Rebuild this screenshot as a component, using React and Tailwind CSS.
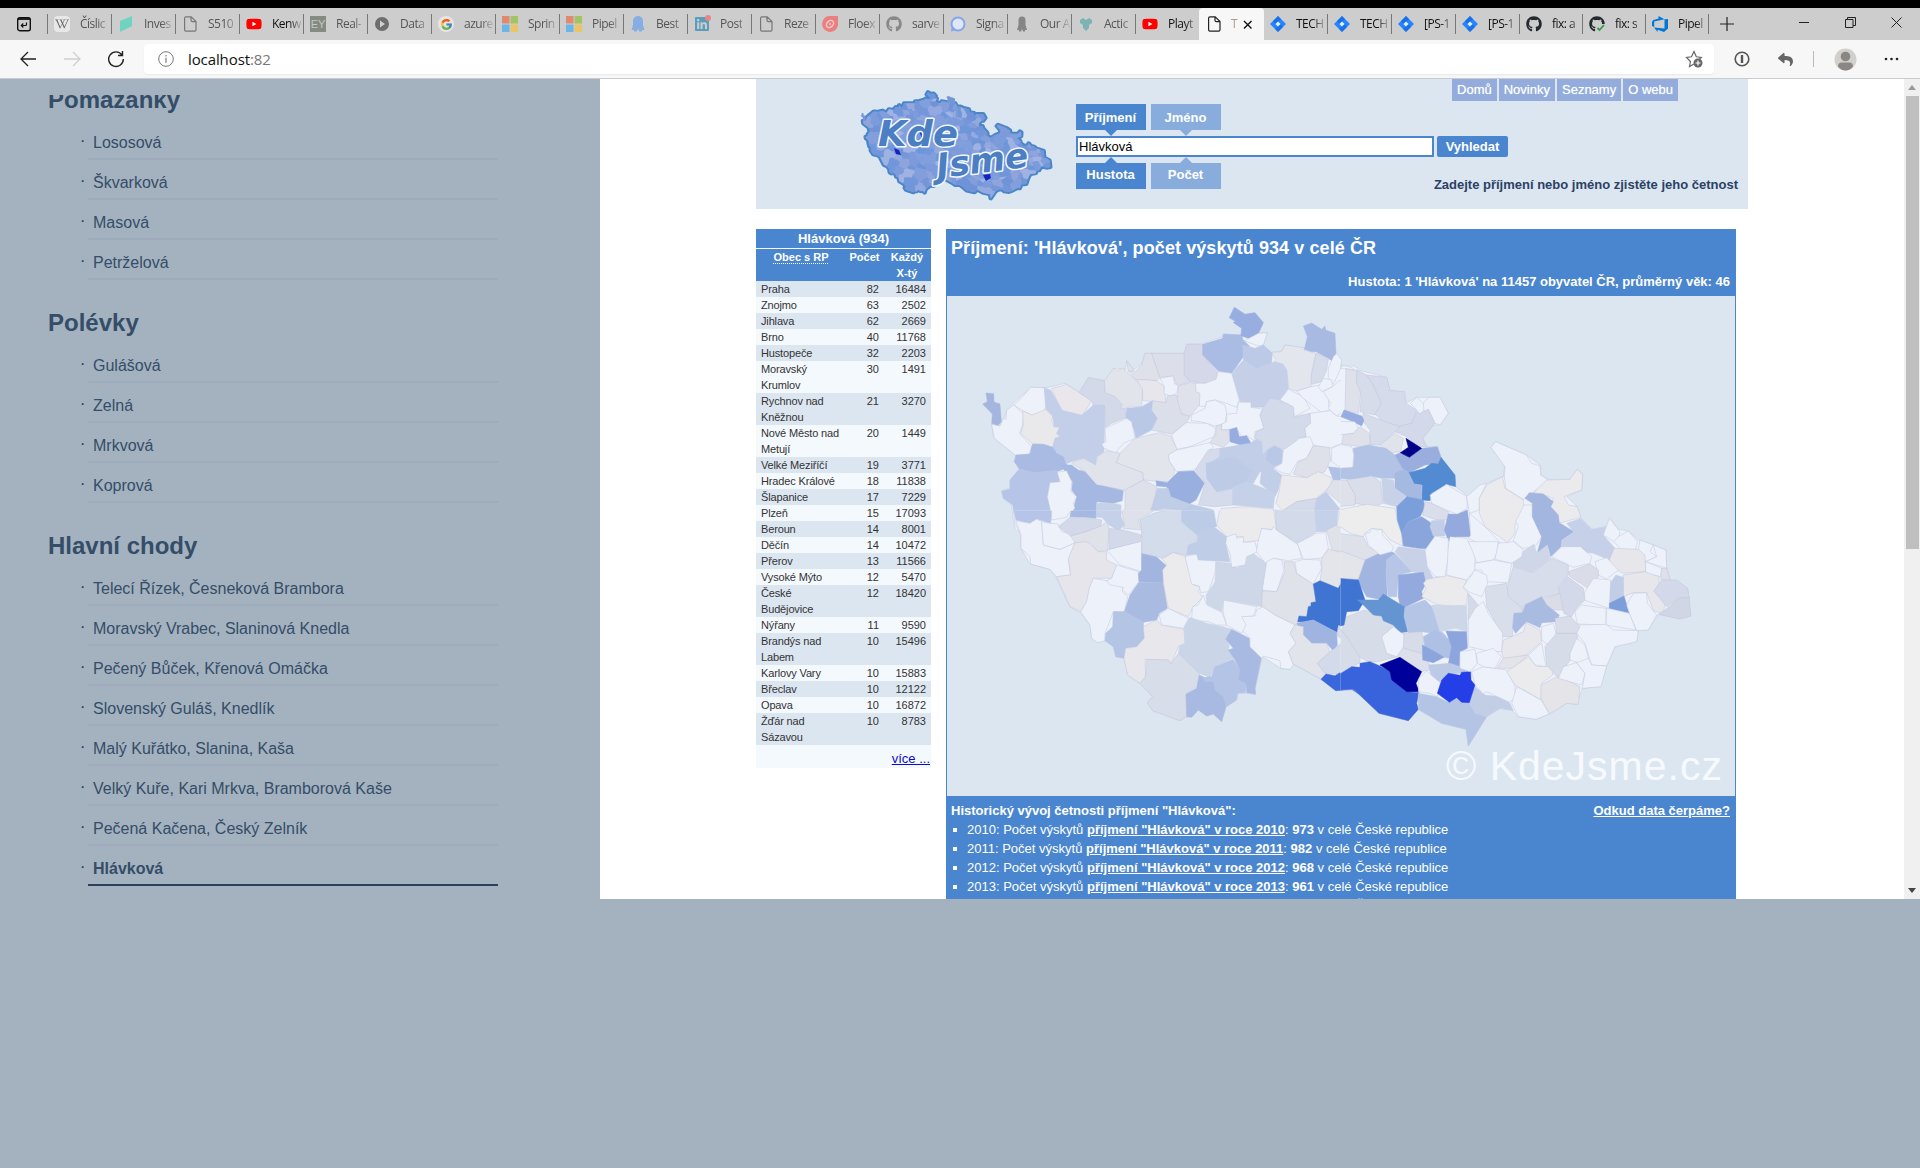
import React from "react";
import { FaWikipediaW, FaGithub, FaReply, FaLinkedin, FaYoutube } from "react-icons/fa";
import { FcGoogle } from "react-icons/fc";

const W = "#edf2fa";

/* Districts of the Czech Republic, grouped in three map sheets drawn at 3x.
   Neighbouring sheets overlap, so each is clipped just inside its border. */
const SHEETS = [
  {
    id: "nw",
    clip: [-10, -10, 1208, 728],
    transform: "translate(13 -6) scale(0.33333)",
    base: "95,405 100,440 168,497 163,515 178,537 150,570 148,595 125,603 130,625 155,645 160,690 168,725 1205,725 1205,240 1180,228 1145,228 1128,190 1118,213 1085,185 975,165 965,183 935,187 910,165 922,128 895,130 910,98 885,68 855,73 823,52 808,83 845,112 843,135 790,132 788,140 728,160 680,163 673,190 555,190 545,222 520,240 500,212 497,238 463,235 435,272 385,263 358,305 315,280 275,290 255,293 215,292 170,330 140,360 133,385 125,390 122,408",
    areas: [
      ["#a4b6df", "78,309 101,311 102,336 120,342 124,395 113,408 95,400 97,372 68,342 82,335"],
      [W, "95,403 120,408 130,385 138,388 140,360 162,345 190,372 188,405 178,430 215,470 208,492 168,497 103,445"],
      [W, "162,345 190,318 212,292 253,293 257,350 250,368 215,375 188,362"],
      ["#e9e8ea", "188,362 215,375 258,358 278,378 275,395 282,410 300,412 290,430 300,440 285,445 278,472 250,463 218,462 182,430 190,405"],
      ["#e9e7eb", "275,295 310,287 315,280 345,300 392,330 388,345 365,376 330,367 307,362 292,335"],
      ["#c3cfe8", "253,293 272,300 292,335 307,362 365,376 400,345 435,346 432,485 410,500 407,525 370,505 335,515 318,522 310,500 290,490 278,472 285,445 300,440 290,430 300,412 282,410 278,378 258,358"],
      ["#d3d9e9", "385,263 433,272 436,308 465,320 487,345 495,355 500,382 455,400 435,412 434,346 400,345 392,330 358,308"],
      ["#dfe1ea", "525,245 545,225 555,190 575,190 600,262 590,272 525,268 505,240"],
      ["#dfe1ea", "500,212 522,240 505,245"],
      ["#e2e4ec", "460,235 472,242 488,235 500,245 525,268 548,290 545,352 515,348 498,355 482,357 487,345 465,320 436,308 433,272"],
      ["#dcdfea", "575,190 673,190 673,255 690,275 650,288 640,258 600,262"],
      ["#d4d8e8", "673,190 680,163 728,163 728,195 772,245 768,268 735,280 690,275 673,255"],
      ["#e6e6ec", "530,268 590,272 613,290 618,338 548,332 548,300"],
      [W, "600,265 640,258 643,280 655,288 650,310 632,317 612,312 613,290"],
      ["#e0e2eb", "655,288 690,278 708,280 710,305 722,310 718,345 690,378 665,372 652,340"],
      ["#aabce3", "728,163 788,145 790,132 845,135 850,150 890,190 850,200 815,250 775,243 728,195"],
      ["#98aee0", "823,52 855,73 885,68 910,98 893,135 870,147 843,137 845,115 820,98 826,94 808,83"],
      [W, "895,130 922,128 910,165 895,168 853,152"],
      ["#bccae8", "848,165 885,175 910,165 937,190 935,220 890,237 850,210"],
      ["#e4e6ed", "935,187 965,185 975,165 1033,173 1032,180 1068,190 1055,250 1053,290 1010,303 985,295 980,240 968,222 940,218 947,210"],
      ["#a8bae2", "1030,108 1055,99 1085,118 1095,108 1097,120 1125,130 1128,190 1118,213 1068,185 1055,185 1033,178 1042,140"],
      ["#c5d0e8", "815,250 850,210 890,237 945,215 968,222 980,240 985,295 960,330 930,325 910,352 873,352 873,337 840,335"],
      [W, "707,280 735,280 768,268 775,245 815,250 838,330 830,352 800,340 765,330 740,335 735,350 718,348 720,310 708,305"],
      [W, "740,335 765,330 795,345 800,370 795,400 765,408 722,395 693,392 695,375 735,355"],
      [W, "800,372 830,370 835,337 873,337 873,352 908,357 900,375 912,415 885,425 882,452 860,437 845,440 830,415 785,420 785,403 800,395"],
      ["#97ace0", "807,420 830,412 838,440 860,437 873,460 862,483 842,465 810,455"],
      ["#d3daea", "930,325 960,330 1000,350 1003,380 1050,370 1052,400 1035,415 1038,440 1012,445 1000,465 968,478 943,468 908,495 903,460 885,445 888,425 912,415 900,375 908,357"],
      [W, "985,298 1030,320 1050,355 1003,380 1000,350 960,330"],
      [W, "1010,303 1053,290 1080,285 1108,310 1105,345 1110,360 1085,368 1030,325"],
      ["#d6dce9", "1068,190 1105,205 1100,240 1085,275 1055,283 1053,260"],
      [W, "1120,200 1130,190 1145,210 1140,240 1120,283 1105,262 1105,235"],
      [W, "1075,290 1090,265 1115,270 1118,290 1085,305"],
      [W, "1140,270 1160,300 1155,360 1130,378 1105,355 1112,340 1090,305 1118,290"],
      [W, "1145,228 1160,228 1180,235 1178,250 1145,245"],
      ["#dfe1ea", "1145,250 1180,250 1205,240 1205,360 1160,355 1157,300"],
      [W, "1050,370 1110,362 1130,378 1145,380 1165,398 1195,400 1190,420 1150,430 1145,460 1110,475 1060,465 1038,440 1035,415 1052,400"],
      ["#97ace0", "1143,380 1158,360 1205,375 1205,398 1165,398"],
      ["#dfe1ea", "1195,400 1205,450 1175,465 1145,455 1150,430"],
      [W, "1020,445 1050,440 1060,465 1040,505 1012,515 990,553 965,548 943,535 965,520 970,480"],
      ["#dfe1ea", "1060,468 1108,472 1112,510 1095,545 1040,563 1000,552 1015,515 1040,505"],
      ["#b0c1e5", "1105,530 1145,535 1175,530 1205,480 1205,570 1120,570"],
      [W, "1115,475 1145,462 1175,468 1185,495 1175,530 1145,535 1115,515"],
      ["#b9c8e6", "922,480 943,468 968,480 965,520 943,530 915,510"],
      ["#b9c8e7", "545,350 578,332 575,360 592,385 575,420 528,445 522,418 497,385 500,355"],
      ["#dadfea", "578,332 618,338 622,318 650,315 655,340 665,372 690,380 678,400 635,432 575,420 592,385 575,360"],
      [W, "435,415 500,385 515,395 525,445 490,460 465,490 432,475 425,462 437,455"],
      [W, "635,435 678,398 740,400 768,415 762,440 690,470 650,478"],
      ["#dfe1ea", "768,408 785,405 783,420 808,420 808,455 790,472 750,458 768,430"],
      ["#e3e5ec", "525,445 600,428 632,438 652,480 625,495 628,513 645,540 640,560 625,575 600,575 550,570 548,548 470,520 480,490"],
      [W, "625,495 650,480 750,458 760,470 705,540 650,545 628,513"],
      ["#e1e3ec", "440,482 467,487 480,490 467,517 548,548 550,570 495,600 430,590 410,585 375,545 335,520 370,505 407,525 412,500"],
      ["#a9bbe2", "218,462 250,463 278,472 290,490 310,500 318,522 330,530 290,545 222,548 178,537 163,515 168,495 210,492 215,470"],
      ["#b6c5e7", "178,537 222,548 290,540 300,575 270,578 262,620 270,655 272,700 235,690 210,700 165,690 158,645 130,625 125,603 150,597 150,570"],
      ["#a5b8e1", "305,525 335,525 355,540 375,545 410,585 430,588 490,602 487,632 460,640 410,635 408,680 375,685 335,675 350,620 335,600 338,575 315,545"],
      [W, "292,547 320,542 335,575 333,605 350,620 340,640 345,655 310,690 275,688 270,655 262,620 270,578 300,575"],
      ["#d5dbea", "705,540 745,480 780,475 780,500 740,525 745,570 775,605 818,595 817,645 765,650 715,645 735,580"],
      ["#c2cee8", "780,475 870,460 890,448 905,455 908,495 922,480 915,510 943,530 940,545 900,545 880,580 845,590 770,600 740,525 780,500"],
      ["#bdcbe7", "738,520 825,500 875,545 850,588 770,605 740,565"],
      ["#98afe0", "588,572 622,578 655,545 702,543 733,580 708,630 688,642 630,620 620,590 590,588"],
      ["#dfe1ea", "495,600 550,570 590,590 585,630 568,670 535,690 530,725 490,725 483,670 495,655"],
      ["#c0cde7", "592,595 625,595 632,620 688,642 665,660 610,655 570,670"],
      ["#c2cee8", "905,535 945,540 965,555 955,600 945,620 900,580"],
      ["#c5d1e8", "820,590 860,575 900,590 945,610 940,655 885,650 817,645"],
      ["#ebebee", "965,555 1040,563 1075,545 1118,565 1110,590 1070,625 1010,635 968,662 948,640 958,600"],
      ["#dfe1ea", "1120,570 1180,570 1183,655 1160,655 1098,603"],
      ["#c2cee8", "1070,625 1098,605 1138,655 1128,690 1130,725 1095,725 1060,690"],
      ["#d3daea", "968,662 1010,635 1070,625 1060,690 1065,725 945,725 940,660"],
      ["#ebebee", "785,655 860,650 940,657 950,725 780,725 770,690"],
      ["#bccbe6", "665,660 690,642 760,660 775,690 765,725 670,725"],
      ["#d3daea", "610,655 665,660 670,725 530,725 535,690 570,670"],
      ["#c5d1e8", "410,640 460,640 483,645 483,680 490,725 440,725 425,685 408,680"],
      ["#d3d9e9", "300,725 330,690 375,682 420,690 415,725"],
      ["#ebebee", "1138,655 1205,650 1205,725 1140,725 1128,690"],
    ],
  },
  {
    id: "sw",
    clip: [-10, 2, 1208, 700],
    transform: "translate(13 214) scale(0.33333)",
    base: "160,-5 165,40 183,75 183,115 210,162 270,178 290,205 330,292 362,308 390,345 395,385 412,398 435,392 460,410 467,440 492,445 503,495 540,520 578,560 562,578 578,602 660,632 678,620 695,620 715,600 740,618 760,612 785,635 798,590 833,565 835,548 887,553 885,535 908,440 962,475 990,478 1000,462 1085,510 1130,542 1175,540 1205,557 1205,-5",
    areas: [
      ["#b6c5e7", "160,-5 275,-5 272,40 230,27 210,40 168,30"],
      [W, "167,32 210,40 230,27 245,35 250,105 300,118 345,98 325,150 332,195 290,200 270,178 212,162 210,140 183,115 183,75"],
      [W, "245,35 270,40 295,42 305,65 332,72 345,98 300,118 250,105"],
      [W, "275,-5 335,-5 320,22 275,30"],
      ["#a5b8e1", "335,-5 410,-5 408,25 375,22 330,20"],
      ["#d3d9e9", "295,50 330,22 375,22 425,30 423,48 380,65 332,78"],
      ["#c5d1e8", "410,-5 483,-5 483,20 494,45 475,62 447,45 425,22 408,22"],
      ["#dfe1ea", "483,-5 590,-5 570,10 535,30 545,60 490,55 494,45"],
      ["#e0e2ea", "332,78 380,65 423,48 440,35 447,55 443,120 415,125 390,98 345,98"],
      ["#e5e5eb", "345,98 380,95 415,125 440,125 440,150 470,165 455,205 400,205 388,235 380,275 362,305 330,290 290,200 332,195 325,145"],
      [W, "440,120 545,93 545,185 480,165"],
      ["#d3d9e9", "447,55 490,60 545,75 540,95 447,118"],
      [W, "400,205 455,215 490,230 487,245 503,260 493,305 460,305 435,370 435,392 412,398 395,385 390,345 362,305 380,275 388,235"],
      [W, "470,165 535,185 537,215 505,255 487,240 490,232 450,225 440,212 455,205"],
      ["#a2b5e0", "545,130 580,132 622,170 608,180 613,218 537,215 535,190 545,180"],
      ["#a9bbe1", "537,217 610,218 622,295 598,310 590,330 550,337 493,305 510,255"],
      ["#b3c4e5", "460,305 495,305 550,337 553,385 530,410 497,415 492,445 467,440 460,410 435,392 437,370 458,350"],
      ["#ebebed", "640,127 675,140 690,190 700,225 722,230 715,245 728,262 700,290 685,320 625,295 610,220 608,180 620,165 605,145"],
      [W, "675,140 710,132 715,148 768,148 765,190 745,245 722,248 718,228 695,222"],
      [W, "598,315 625,295 685,325 672,355 605,345"],
      ["#e7e7ec", "550,350 590,330 605,345 672,358 675,400 655,410 633,462 625,450 555,448 557,500 540,520 503,495 492,445 497,415 530,410 553,385"],
      [W, "697,290 715,285 730,255 738,280 785,305 800,345 770,345 745,335 695,330"],
      ["#cbd5e8", "690,322 740,340 790,350 815,358 797,388 808,405 805,420 822,445 775,465 750,502 715,490 655,430 658,408 675,400 672,350"],
      ["#d7deea", "560,448 625,450 633,462 655,430 718,490 712,530 678,550 680,620 660,632 578,602 562,578 578,560 540,520 557,500"],
      ["#a8bae1", "718,495 735,503 750,500 765,520 790,545 800,575 798,590 785,635 760,612 740,618 715,600 695,622 680,620 678,552 710,535"],
      ["#b4c4e6", "765,470 820,448 840,480 835,510 858,520 857,548 833,550 830,570 800,590 790,560 765,540 762,515 735,515 730,503 755,500"],
      ["#a8bae1", "815,358 868,385 870,410 905,440 885,535 887,553 860,548 858,520 835,510 840,480 822,445 805,420 820,415 797,388"],
      [W, "840,318 885,318 890,300 910,290 945,315 1005,345 990,370 1008,400 985,425 1000,465 990,478 962,475 960,452 910,438 905,445 870,410 870,385 845,360 855,345"],
      [W, "790,270 890,290 880,318 845,320 858,345 845,370 800,345 790,310"],
      ["#cdd7e7", "768,155 815,160 830,173 858,160 860,138 875,127 920,160 905,290 792,270 785,307 740,285 738,255 765,215"],
      ["#bfcde7", "715,55 755,45 800,80 798,105 810,155 770,153 715,150 710,132 680,135 685,105 712,95"],
      ["#d3dcea", "545,60 540,30 580,10 640,-5 665,-5 668,40 712,75 712,95 685,105 680,137 640,127 610,145 545,130"],
      ["#bccbe6", "665,-5 760,-5 770,50 720,55 712,75 665,35"],
      ["#ebebee", "780,-5 940,-5 950,60 905,55 900,90 850,97 850,80 800,80 770,45 775,20"],
      [W, "800,80 828,72 830,85 850,80 850,97 885,95 893,125 860,140 855,165 815,172 810,130 797,100"],
      [W, "905,55 935,60 940,50 950,60 1015,105 1025,145 985,152 940,145 918,162 890,125 893,100"],
      ["#d3daea", "945,-5 1065,-5 1070,65 1012,100 950,60"],
      ["#c5d1e8", "1065,-5 1135,-5 1130,45 1100,65 1070,65"],
      [W, "1012,100 1070,70 1097,68 1105,115 1085,145 1030,148"],
      ["#e0e2ea", "1100,60 1130,45 1205,60 1205,145 1115,118"],
      ["#ebebee", "1140,-5 1205,-5 1205,60 1130,50"],
      [W, "920,155 940,145 965,150 972,180 950,245 907,240"],
      ["#e0e2ea", "972,155 1000,155 1010,190 1058,220 1068,270 1045,290 1050,320 1010,345 945,315 905,288 907,243 950,245 975,185"],
      [W, "1005,155 1030,148 1080,150 1085,175 1060,222 1010,190"],
      ["#e4e5eb", "1085,145 1105,118 1205,140 1205,190 1185,210 1150,210 1135,235 1080,212 1085,180"],
      ["#d6dde9", "1130,367 1140,345 1155,350 1172,302 1205,300 1205,425 1165,390 1135,380"],
      ["#4074d3", "1060,222 1080,212 1135,235 1150,207 1190,210 1205,240 1205,300 1172,302 1155,350 1135,345 1130,367 1060,330 1030,335 1013,335 1017,318 1040,320 1045,290 1053,288 1053,278 1068,275"],
      ["#9fb4e1", "1010,340 1060,330 1130,367 1132,405 1120,423 1100,400 1055,400 1030,375"],
      ["#e2e4eb", "1005,345 1030,350 1030,375 1055,400 1100,400 1110,425 1072,460 1095,490 1085,508 1000,462 985,425 1008,400 990,370"],
      ["#d3daea", "1110,425 1165,385 1205,425 1205,470 1145,492 1095,490 1072,460"],
      ["#3a67db", "1083,508 1098,492 1125,497 1140,488 1150,495 1175,472 1205,470 1205,557 1175,538 1127,542"],
    ],
  },
  {
    id: "e",
    clip: [2, -10, 1200, 1200],
    transform: "translate(393 74) scale(0.33333)",
    base: "-5,-5 55,0 140,22 150,62 195,65 198,100 230,82 265,82 300,82 325,130 300,165 280,165 248,205 260,230 292,230 303,262 345,315 347,350 385,380 440,340 490,320 495,285 453,232 467,215 560,255 600,285 605,318 625,328 690,328 712,298 728,310 725,360 680,380 712,410 722,442 755,478 800,470 810,445 835,478 865,483 895,510 940,525 978,540 980,590 990,628 1042,655 1052,738 1020,747 955,733 925,780 895,782 890,815 825,830 800,888 783,950 727,955 710,1003 680,1000 628,1032 588,1048 535,1040 515,1020 480,1015 440,1040 385,1128 378,1078 305,1060 235,1018 205,1052 117,1030 40,957 -5,960",
    areas: [
      ["#dfe1ea", "18,-5 55,5 62,75 55,130 15,122"],
      ["#d6dcea", "50,0 80,15 98,42 125,100 105,135 60,125 65,75 50,40"],
      ["#d5dbea", "80,15 140,22 150,62 192,65 197,100 230,120 215,160 180,170 130,155 105,132 125,100 98,42"],
      [W, "212,100 230,82 250,100 258,115 240,132"],
      [W, "250,100 265,82 300,82 325,130 300,165 285,160 265,118 252,125"],
      ["#d3d9ea", "230,125 240,132 265,118 285,160 248,205 260,230 235,230 200,200 165,185 180,168 215,160"],
      ["#d6dcea", "70,130 150,160 180,170 160,190 120,225 90,225 90,180 65,150"],
      ["#97ace0", "3,140 12,120 65,138 72,150 65,168 40,155"],
      [W, "-5,155 45,155 55,175 40,190 -5,195"],
      ["#dfe1ea", "10,195 40,190 60,170 88,190 90,225 60,230 30,225 5,222"],
      ["#e1e3eb", "120,225 165,190 190,205 182,245 138,250"],
      ["#b3c3e5", "40,235 85,225 138,235 165,255 190,295 165,325 125,325 90,318 60,330 -5,325 -5,295 40,290"],
      [W, "-5,222 35,230 42,255 38,292 -5,295"],
      ["#9aaedd", "165,255 181,248 208,262 245,235 292,230 303,262 295,282 255,285 207,308 190,298"],
      ["#00008b", "198,205 245,235 208,262 181,248 205,232"],
      ["#538bd2", "205,308 255,295 275,280 295,282 303,262 345,315 347,350 320,343 275,370 270,392 245,390 247,345 222,342"],
      ["#a6b9e0", "165,310 190,298 207,310 222,342 245,345 245,390 200,380 165,355"],
      ["#c7d2e8", "125,325 160,330 165,355 198,378 170,410 130,400"],
      ["#d9deea", "20,330 95,318 122,335 128,400 100,410 45,400 45,375"],
      ["#dfe1ea", "-5,330 20,330 45,375 45,405 -5,410"],
      ["#dfe1ea", "-5,490 70,500 85,530 130,555 75,575 -5,540"],
      ["#ededee", "-5,420 80,403 165,415 175,465 185,490 188,528 150,510 125,478 95,475 75,490 70,500 30,490 -5,465"],
      ["#7b9fdb", "170,410 200,380 250,390 255,410 240,440 205,455 185,490 172,450"],
      ["#8aa5dc", "185,490 205,455 245,440 275,460 280,490 285,510 270,537 235,535 190,528"],
      ["#d9deea", "255,395 275,400 325,425 325,450 290,450 248,435"],
      [W, "270,375 320,343 380,380 382,415 352,433 320,420 275,400"],
      ["#c2cde8", "275,452 313,450 315,498 280,498 270,470"],
      ["#94a9dd", "325,432 352,433 382,420 392,500 350,500 325,512 313,480"],
      [W, "380,380 420,345 440,340 418,385 418,420 388,430"],
      [W, "388,430 435,470 480,518 415,520 385,505 392,495"],
      ["#ebebed", "418,385 440,345 487,320 495,355 550,390 552,420 525,465 525,490 503,518 435,470 418,430"],
      [W, "453,232 467,215 560,255 575,280 600,287 602,315 625,330 610,345 575,370 550,388 497,355 493,320 495,290"],
      ["#ebebed", "580,368 620,330 690,328 712,298 728,315 725,360 672,380 685,405 712,410 722,442 655,460 630,405 640,385 605,372"],
      [W, "552,405 577,405 577,440 605,500 585,530 548,535 520,512 535,470 527,455"],
      ["#a3b6e0", "555,385 568,368 610,372 640,395 632,410 655,435 658,458 702,485 665,510 663,530 632,560 622,525 590,555 605,500 577,440 577,400"],
      ["#c6d0e8", "680,460 722,445 755,478 800,470 790,495 825,535 808,570 760,550 722,545 690,530 663,530 668,510 702,487"],
      [W, "808,445 840,485 835,510 822,515 790,495"],
      [W, "835,500 865,483 893,515 885,540 845,540 822,515"],
      [W, "900,510 940,525 930,545 950,560 917,575 895,540"],
      [W, "940,525 978,540 980,595 917,575 950,560"],
      ["#e7e6eb", "808,570 822,535 895,538 915,555 917,605 850,610 808,590"],
      [W, "917,575 965,595 962,620 917,610"],
      [W, "690,530 722,530 755,560 750,580 700,592 635,560 665,530"],
      [W, "765,575 800,563 835,600 800,627 775,615"],
      ["#dadde8", "685,605 750,582 775,600 775,620 745,655 690,620"],
      ["#e7e6eb", "850,615 915,605 957,620 957,640 942,665 975,700 970,732 940,722 920,668 880,668 850,680"],
      ["#dfe0e8", "965,595 980,595 990,628 962,628"],
      ["#d3d9e8", "965,630 1010,630 1043,655 1048,682 1015,685 980,710 942,662"],
      ["#d1d6e5", "975,720 1015,685 1048,682 1052,738 1020,747 955,733"],
      ["#c2cde6", "810,640 828,615 850,622 850,680 808,700"],
      [W, "735,665 760,625 812,630 808,715 730,690"],
      ["#7c9fdb", "808,700 852,678 868,730 808,715"],
      ["#d3d9e8", "650,660 683,620 730,655 735,690 712,712 693,742 672,730"],
      [W, "880,670 920,668 922,700 950,735 925,780 890,782 870,735 860,705"],
      [W, "705,725 725,705 798,715 798,765 712,762"],
      [W, "800,715 868,730 888,780 798,765"],
      [W, "710,765 798,763 820,780 895,782 890,815 825,830 800,888 755,885 735,820 710,790"],
      ["#d7ddea", "505,640 520,590 580,608 620,575 635,565 685,585 685,615 655,650 660,670 605,685 550,705 548,725 520,735 500,670"],
      ["#dadde8", "605,690 660,670 670,720 635,720 608,700"],
      ["#cfd6e7", "548,545 582,522 590,550 622,525 632,565 610,585 575,608 520,590 518,575"],
      ["#d8deea", "435,650 500,640 505,680 545,712 548,730 520,735 518,800 490,800 485,790 440,710"],
      ["#a9bbe1", "555,705 605,680 620,705 658,735 650,755 605,758 600,773 560,755 527,790 518,775 522,730 548,728"],
      ["#c8d1e8", "165,545 175,530 255,540 262,590 280,625 255,630 250,612 215,605"],
      ["#a1b5e0", "60,600 75,570 140,540 165,550 140,570 138,620 142,675 130,690 80,680 50,628"],
      ["#b7c6e6", "140,570 165,550 215,605 175,615 170,680 145,680 138,620"],
      ["#94a9dd", "175,615 250,607 258,640 245,665 250,685 195,712 180,705 175,680"],
      ["#ebebed", "260,628 320,617 380,630 370,655 383,665 380,705 340,710 290,703 245,680 258,655 250,640"],
      [W, "330,500 380,505 405,550 405,600 380,630 320,615 323,540"],
      [W, "255,540 285,498 325,505 323,570 315,620 285,620 262,590"],
      [W, "385,515 475,515 470,550 460,570 410,578 398,545"],
      [W, "475,520 520,515 550,540 545,560 515,580 465,568"],
      [W, "405,580 460,570 515,580 505,638 435,635 425,600 405,600"],
      [W, "370,650 405,600 440,615 443,640 425,680 385,665"],
      ["#d5dae8", "385,670 417,708 410,740 385,750"],
      [W, "405,715 430,695 445,730 488,790 485,845 450,845 410,835 385,830 385,750"],
      ["#e4e5eb", "-5,540 75,570 55,628 -5,625"],
      [W, "75,490 90,488 95,475 110,480 125,478 128,495 160,530 155,545 120,555 85,525"],
      ["#d6dde9", "20,740 75,720 125,740 165,768 128,795 140,850 170,860 115,875 85,875 60,862 20,830 5,780"],
      ["#d6dce8", "-5,770 20,800 60,862 60,878 -5,915"],
      ["#4074d3", "-5,625 55,630 75,690 55,722 20,725 12,765 -5,770"],
      ["#6494d2", "52,690 115,690 130,672 195,712 192,735 203,785 180,788 160,765 130,752 125,738 100,735 70,705"],
      ["#b5c5e6", "195,712 255,690 280,715 300,780 320,800 280,790 245,785 205,788 192,740"],
      ["#cdd7e8", "275,705 380,707 382,785 345,775 300,785"],
      ["#d6dce8", "190,790 245,785 255,830 245,850 190,835"],
      ["#dde0ea", "170,865 190,835 245,850 270,885 270,900 240,905"],
      [W, "125,800 160,770 192,795 190,830 170,860 140,850"],
      ["#aec0e4", "250,800 285,780 330,810 340,840 330,865 300,860 255,830"],
      ["#8ca6dd", "247,825 285,845 312,862 280,878 248,870"],
      ["#8ca6dd", "318,783 380,785 382,835 360,845 358,890 325,882 335,830"],
      ["#bccae6", "265,885 330,880 360,890 390,905 320,915 300,935 275,920"],
      ["#3963dc", "-5,915 35,890 60,892 60,880 90,875 120,888 150,905 155,930 200,965 237,968 230,1000 235,1018 205,1052 117,1030 40,957 -5,960"],
      ["#00009b", "120,885 180,862 245,905 228,940 237,965 200,965 155,930 150,905"],
      [W, "237,925 260,903 302,940 292,980 270,970 235,965"],
      ["#b4c4e5", "235,970 290,980 325,997 350,985 388,1000 410,1030 440,1040 385,1128 378,1078 305,1060 235,1018"],
      ["#c2cee6", "405,950 435,975 480,980 510,1000 520,1022 480,1015 440,1040 405,1030 388,1000"],
      [W, "395,905 430,890 500,900 525,948 525,990 505,995 440,965 430,972 405,945"],
      ["#243fe8", "305,930 325,910 360,916 365,907 392,905 393,930 405,945 388,998 365,997 350,983 328,997 292,970"],
      [W, "360,845 405,838 412,880 390,905 360,895"],
      [W, "410,850 460,835 485,860 465,895 430,890 412,880"],
      ["#e8e7eb", "485,845 490,810 550,785 558,758 600,780 605,815 565,850 530,867 490,865"],
      ["#e3e3e9", "470,895 490,865 565,855 520,895"],
      ["#ebebed", "500,905 565,860 590,890 638,888 638,915 605,940 603,990 525,945"],
      ["#e5e4e9", "603,945 655,918 720,950 715,1003 680,1000 628,1032 603,985"],
      [W, "515,1000 530,950 603,990 628,1032 588,1048 535,1040"],
      [W, "605,770 640,760 650,800 625,825 605,810"],
      [W, "565,855 605,820 618,890 585,885"],
      ["#d6dce8", "615,830 650,790 710,790 715,815 690,850 690,870 655,925 620,885"],
      ["#d8dde9", "645,745 690,738 720,770 710,790 650,790"],
      [W, "690,850 710,805 735,825 745,865 720,880 690,870"],
      [W, "655,925 670,890 710,878 735,910 725,945"],
      [W, "710,878 745,865 755,885 800,888 783,950 727,955 735,910"],
    ],
  },
];

const LOGO_TINTS = ["#7596d8", "#829edb", "#6d97d9", "#7b9bdb", "#93a9df", "#7093d7", "#809fdc", "#8ea4db", "#7196d9", "#9fb2e3", "#7d9bdb"];

const Page = ({ dark }) => (
  <svg width="16" height="16" viewBox="0 0 16 16" fill="none" stroke={dark ? "#222" : "#777"} strokeWidth="1.2">
    <path d="M4 .8h5.2L14 5.6v8.2q0 1.4-1.4 1.4H4q-1.4 0-1.4-1.4V2.2Q2.600.8 4 .8zM9 .8v3.400q0 1.400 1.400 1.400H14" />
  </svg>
);
const Ms = () => (
  <svg width="16" height="16"><path fill="#e0896f" d="M0 0h7.500v7.500H0z" /><path fill="#a3c364" d="M8.500 0H16v7.500H8.500z" /><path fill="#6bb6e6" d="M0 8.500h7.500V16H0z" /><path fill="#ebc468" d="M8.500 8.500H16V16H8.500z" /></svg>
);
const Jira = () => (
  <svg width="16" height="16"><path fill="#2684ff" d="M8 0l8 8-8 8-8-8z" /><path fill="#1560d8" d="M8 0l3 3-5.500 5L3 5z M8 16l-3-3 5.500-5L13 11z" opacity=".6" /><path fill="#e4efff" d="M8 5.400L10.600 8 8 10.600 5.400 8z" /></svg>
);
const icons = {
  wiki: <span className="flex size-4 items-center justify-center rounded-sm bg-[#e8e8e8] text-[#666]"><FaWikipediaW size={14} /></span>,
  teal: <svg width="16" height="16"><path fill="#6fd3c0" d="M2 5L14 0v10L2 16z" /></svg>,
  page: <Page />,
  yt: <FaYoutube size={16} color="#f00" className="rounded bg-[radial-gradient(#fff_30%,transparent_31%)]" />,
  ey: <span className="flex size-4 items-center justify-center bg-[#858a84] font-['Liberation_Sans'] text-[11px] text-[#c2c8c0]">EY</span>,
  play: <svg width="16" height="16"><circle cx="8" cy="8" r="7" fill="#6e6e6e" /><path fill="#d0d0d0" d="M6 4.500l5 3.500-5 3.500z" /></svg>,
  google: <span className="flex size-4 items-center justify-center rounded-full bg-[#ececec] opacity-80"><FcGoogle size={13} /></span>,
  ms: <Ms />,
  octo: <svg width="16" height="16" fill="#86aee3"><path d="M3 5a5 5 0 0110 0v4l1.500 5H12v1.500H9.500L8 13l-1.500 2.500H4V14H1.500L3 9z" /></svg>,
  octoGray: <svg width="16" height="16" fill="#858585"><path d="M4.500 4.500a3.500 4 0 017 0V9l1.500 5h-2v1.500H9L8 13l-1 2.500H5V14H3l1.500-5z" /></svg>,
  li: <span className="relative flex size-4"><FaLinkedin size={16} color="#5b9dbd" /><i className="absolute -top-px -right-px size-1.5 rounded-full bg-[#e88585]" /></span>,
  floe: <svg width="16" height="16"><path fill="#ea7f80" d="M16 0v7a8 8 0 11-7-7z" /><ellipse cx="8" cy="8" rx="4" ry="3" transform="rotate(-45 8 8)" fill="none" stroke="#f3c5c5" strokeWidth="1.500" /><circle cx="8" cy="8" r="1" fill="#f3c5c5" /></svg>,
  gh: <FaGithub size={16} color="#888" />,
  ghDark: <FaGithub size={16} color="#24292e" />,
  ghOk: <span className="relative flex size-4"><FaGithub size={16} color="#24292e" /><svg className="absolute right-0 bottom-0" width="9" height="8"><rect width="9" height="8" fill="#cdcdcd" /><path d="M1.500 4l2 2L8 1" fill="none" stroke="#2f9e44" strokeWidth="1.800" /></svg></span>,
  signal: <svg width="16" height="16"><circle cx="8" cy="8" r="6.500" fill="#dfe6f5" stroke="#84a5ec" strokeWidth="2" /><path d="M1 15.500l1-5.500L6.500 14z" fill="#84a5ec" /></svg>,
  action: <svg width="16" height="16" fill="#7cb4b4"><path d="M2 4l3-2 3 2 3-2 3 2v3l-3 2v3l-3 3-3-3V9L2 7z" /></svg>,
  jira: <Jira />,
  azure: <svg width="16" height="16"><path fill="#0078d4" d="M16 3v9.500L12 16l-6.500-2.200v2.200L2 11.500l10.500.900V3.300zM12.500 3.300L6.500 0v2.400L1.400 3.900 0 5.800v4.100l2.200 1V5.400z" /></svg>,
};

const TABS = [
  ["wiki", "Číslic"], ["teal", "Inves"], ["page", "S510"], ["yt", "Kenw", 1], ["ey", "Real-"], ["play", "Data"], ["google", "azure"],
  ["ms", "Sprin"], ["ms", "Pipel"], ["octo", "Best"], ["li", "Post"], ["page", "Reze"], ["floe", "Floex"], ["gh", "sarve"], ["signal", "Signa"],
  ["octoGray", "Our A"], ["action", "Actic"], ["yt", "Playt", 1],
];
const TABS2 = [["jira", "TECH"], ["jira", "TECH"], ["jira", "[PS-1"], ["jira", "[PS-1"], ["ghDark", "fix: a", 1], ["ghOk", "fix: s", 1], ["azure", "Pipel", 1]];

function Tab({ icon, text, dark, narrow, last }) {
  return (
    <div className={`flex h-full shrink-0 items-center pl-[6px] ${narrow ? "w-[63px]" : "w-16"}`}>
      <span className="flex size-4 shrink-0">{icons[icon]}</span>
      <span className={`ml-[10px] whitespace-nowrap text-[12px] tracking-[-0.5px] [mask-image:linear-gradient(90deg,#000_17px,rgba(0,0,0,0.15)_29px)] ${dark ? "text-[#111]" : "text-[#555]"}`}>{text}</span>
      {!last && <span className="ml-auto h-5 w-px shrink-0 bg-[#777]" />}
    </div>
  );
}

function Browser() {
  return (
    <header className="font-['Open_Sans',sans-serif]">
      <div className="h-2 bg-black" />
      <div className="flex h-8 items-center bg-[#cdcdcd]">
        <div className="flex h-full w-12 items-center">
          <svg className="ml-4" width="16" height="16" fill="none" stroke="#111" strokeWidth="1.400"><rect x="1.700" y="1.700" width="12.600" height="13" rx="2" /><path d="M2 3h12" strokeWidth="1.800" /><path d="M10.500 6.500v2q0 1-1 1H5.500M7.300 7.500l-2 2 2 2" strokeWidth="1.200" /></svg>
          <span className="ml-auto h-5 w-px bg-[#777]" />
        </div>
        {TABS.map((t, i) => <Tab key={i} icon={t[0]} text={t[1]} dark={t[2]} last={i === TABS.length - 1} />)}
        <div className="-ml-px flex h-full w-[65px] items-center rounded-t-[4px] bg-[#f7f7f7] pl-[7px]">
          <Page dark />
          <span className="ml-[9px] w-[7px] text-[12px] text-[#8a7560] opacity-70">T</span>
          <svg className="ml-[3px]" width="13" height="13" stroke="#111" strokeWidth="1.400"><path d="M3 3l7.500 7.500M10.500 3L3 10.500" /></svg>
        </div>
        <div className="flex h-full">
          {TABS2.map((t, i) => <Tab key={i} icon={t[0]} text={t[1]} dark narrow={i > 3} />)}
        </div>
        <svg className="ml-[10px]" width="16" height="16" stroke="#222" strokeWidth="1.200"><path d="M8 1v14M1 8h14" /></svg>
        <div className="mr-[18px] ml-auto flex items-center gap-[35px] pb-1">
          <svg width="11" height="11" stroke="#222"><path d="M0 5.500h10" /></svg>
          <svg width="11" height="11" stroke="#222" fill="none"><path d="M.5 2.500h7.500v8H.5zM2.500 2.500v-2h8v8h-2.500" /></svg>
          <svg width="11" height="11" stroke="#222"><path d="M.5.5l10 10M10.500.5l-10 10" /></svg>
        </div>
      </div>
      <div className="flex h-[39px] items-center border-b border-[#c9cbd0] bg-[#f7f7f7]">
        <div className="flex w-36 items-center pl-5">
          <svg width="17" height="16" fill="none" stroke="#222" strokeWidth="1.300"><path d="M16 8H1M8 1L1 8l7 7" /></svg>
          <svg className="ml-[27px]" width="17" height="16" fill="none" stroke="#d0d0d0" strokeWidth="1.300"><path d="M0 8h16M9 1l7 7-7 7" /></svg>
          <svg className="ml-[26px]" width="18" height="18" fill="none" stroke="#222" strokeWidth="1.400"><path d="M15 5A7.300 7.300 0 1016.300 9M15.500 1v4.500H11" /></svg>
        </div>
        <div className="flex h-[30px] w-[1570px] items-center rounded-[4px] bg-white pl-[14px] shadow-[0_1px_2px_rgba(0,0,0,0.06)]">
          <svg width="16" height="16" fill="none" stroke="#777"><circle cx="8" cy="8" r="7.300" /><path d="M8 6.800v5M8 4v1.400" strokeWidth="1.200" /></svg>
          <span className="ml-[14px] text-[15px] tracking-[-0.1px] text-[#111]">localhost<span className="text-[#777]">:82</span></span>
          <svg className="mr-[11px] ml-auto" width="18" height="18" fill="none" stroke="#666" strokeWidth="1.200"><path d="M9 14l-4.500 2.500.900-5L1.500 7.500l5-.700L9 1.500l2.300 5.300 5 .700L14 9.500" /><circle cx="13" cy="13" r="4.500" fill="#666" stroke="none" /><path d="M13 10.500v5M10.500 13h5" stroke="#fff" /></svg>
        </div>
        <svg className="ml-5" width="16" height="16" fill="none" stroke="#555"><circle cx="8" cy="8" r="6.800" strokeWidth="1.600" /><path d="M8 4v8" strokeWidth="2.400" /></svg>
        <FaReply className="ml-[28px]" size={15} color="#666" />
        <span className="ml-[20px] h-4 w-px bg-[#bbb]" />
        <svg className="ml-[20px]" width="23" height="23"><circle cx="11.500" cy="11.500" r="11" fill="#d2d0cd" /><circle cx="11.500" cy="8.500" r="4.800" fill="#8b8681" /><path d="M4 18.500q0-4 4-4h7q4 0 4 4-3 4-7.500 4T4 18.500z" fill="#8b8681" /></svg>
        <svg className="ml-[27px]" width="15" height="4" fill="#222"><circle cx="2" cy="2" r="1.300" /><circle cx="7.500" cy="2" r="1.300" /><circle cx="13" cy="2" r="1.300" /></svg>
      </div>
    </header>
  );
}

const MENU = [
  ["Pomazánky", ["Lososová", "Škvarková", "Masová", "Petrželová"]],
  ["Polévky", ["Gulášová", "Zelná", "Mrkvová", "Koprová"]],
  ["Hlavní chody", ["Telecí Řízek, Česneková Brambora", "Moravský Vrabec, Slaninová Knedla", "Pečený Bůček, Křenová Omáčka", "Slovenský Guláš, Knedlík", "Malý Kuřátko, Slanina, Kaša", "Velký Kuře, Kari Mrkva, Bramborová Kaše", "Pečená Kačena, Český Zelník", "Hlávková"]],
];

function Sidebar() {
  return (
    <aside className="w-[600px] pt-4 text-[#344d68]">
      <div className="overflow-hidden pl-12">
        <div className="-mt-[9px]">
          {MENU.map(([title, items]) => (
            <section key={title} className="mb-[29px]">
              <h2 className="h-[34px] text-[24px] leading-[28px] font-bold">{title}</h2>
              <ul className="ml-8">
                {items.map((it) => (
                  <li key={it} className="flex h-10 items-end">
                    <span className="w-2 pb-[9px] text-[16px] leading-5 text-[#22364d]">·</span>
                    <span className={`w-[410px] border-b-2 pb-[5px] pl-[5px] text-[16px] leading-5 ${it === "Hlávková" ? "border-[#2b4059] font-bold" : "border-[#9dabba]"}`}>{it}</span>
                  </li>
                ))}
              </ul>
            </section>
          ))}
        </div>
      </div>
    </aside>
  );
}

const ROWS = [
  ["Praha", 82, 16484], ["Znojmo", 63, 2502], ["Jihlava", 62, 2669], ["Brno", 40, 11768], ["Hustopeče", 32, 2203], ["Moravský Krumlov", 30, 1491],
  ["Rychnov nad Kněžnou", 21, 3270], ["Nové Město nad Metují", 20, 1449], ["Velké Meziříčí", 19, 3771], ["Hradec Králové", 18, 11838], ["Šlapanice", 17, 7229],
  ["Plzeň", 15, 17093], ["Beroun", 14, 8001], ["Děčín", 14, 10472], ["Přerov", 13, 11566], ["Vysoké Mýto", 12, 5470], ["České Budějovice", 12, 18420],
  ["Nýřany", 11, 9590], ["Brandýs nad Labem", 10, 15496], ["Karlovy Vary", 10, 15883], ["Břeclav", 10, 12122], ["Opava", 10, 16872], ["Žďár nad Sázavou", 10, 8783],
];

function Logo() {
  return (
    <svg className="ml-[102px] shrink-0" width="196" height="116" viewBox="0 0 196 116">
      <g transform="translate(-7 1.500) scale(0.268 0.242)">
        {SHEETS.map((sh) => <g key={sh.id} transform={sh.transform}><polygon points={sh.base} fill="#4b86c9" stroke="#4b86c9" strokeWidth="50" strokeLinejoin="round" /></g>)}
        {SHEETS.map((sh, i) => (
          <g key={sh.id} transform={sh.transform}>
            <polygon points={sh.base} fill="#7b9bdb" />
            {sh.areas.map((a, j) => <polygon key={j} points={a[1]} fill={LOGO_TINTS[(j * 7 + i) % 11]} />)}
          </g>
        ))}
      </g>
      <path d="M62 45l4-4 2 6-4 4zM36 60l5 2 2 5-5-1zM125 87l7-1 1 4-5 3z" fill="#1524c0" />
      <g fontFamily="DejaVu Sans, sans-serif" fontStyle="italic" fontWeight="bold" fill="#4b7ec2" stroke="#f4f9ff" strokeWidth="3" paintOrder="stroke" strokeLinejoin="round">
        <text x="20" y="58" fontSize="36" textLength="80" lengthAdjust="spacingAndGlyphs">Kde</text>
        <text x="80" y="90" fontSize="34" textLength="92" lengthAdjust="spacingAndGlyphs" transform="rotate(-7 80 90)">Jsme</text>
      </g>
    </svg>
  );
}

function TabButton({ children, active, bottom }) {
  const tri = (
    <svg className={bottom ? "rotate-180" : ""} width="12" height="6"><path d="M0 0h12L6 6z" fill={active ? "#4a86cf" : "#88addd"} /></svg>
  );
  return (
    <div className="flex w-[70px] flex-col items-center">
      {bottom && tri}
      <div className={`flex h-[26px] w-full justify-center pr-px text-[13px] font-bold text-white ${bottom ? "leading-[24px]" : "leading-[28px]"} ${active ? "bg-[#4a86cf]" : "bg-[#88addd]"}`}>{children}</div>
      {!bottom && tri}
    </div>
  );
}

function SiteHeader() {
  return (
    <div className="flex h-[130px] w-[992px] bg-[#dce6f1]">
      <div className="pt-[9px]"><Logo /></div>
      <div className="flex w-[694px] flex-col pl-[22px]">
        <div className="h-[25px]">
          <nav className="flex justify-end gap-[2px] pr-[70px] text-[13px] leading-[22px] text-white">
            {["Domů", "Novinky", "Seznamy", "O webu"].map((n) => <span key={n} className="h-[22px] bg-[#93acdc] px-[5px] [text-shadow:0_0_1px_rgba(255,255,255,0.6)]">{n}</span>)}
          </nav>
        </div>
        <div className="flex gap-[5px]"><TabButton active>Příjmení</TabButton><TabButton>Jméno</TabButton></div>
        <div className="flex gap-[3px]">
          <div className="h-[21px] w-[358px] border-2 border-[#4a86cf] bg-white pl-px text-[13px] leading-[17px] text-black">Hlávková</div>
          <div className="h-[21px] w-[71px] rounded-[2px] bg-[#4a86cf] text-center text-[13px] leading-[21px] font-bold text-white">Vyhledat</div>
        </div>
        <div className="flex">
          <div className="flex gap-[5px]"><TabButton bottom active>Hustota</TabButton><TabButton bottom>Počet</TabButton></div>
          <div className="ml-auto pt-[19px] pr-[10px] text-[13px] leading-[18px] font-bold whitespace-nowrap text-[#2b4163]">Zadejte příjmení nebo jméno zjistěte jeho četnost</div>
        </div>
      </div>
    </div>
  );
}

function Ranking() {
  return (
    <div className="w-[175px] self-start bg-[#f4f9fe] text-[11px] leading-4 text-[#333]">
      <div className="mb-px h-[19px] bg-[#4a86cf] text-center text-[13px] leading-[19px] font-bold text-white">Hlávková (934)</div>
      <div className="grid h-8 grid-cols-[90px_37px_48px] bg-[#4a86cf] text-center font-bold text-white">
        <span><span className="underline decoration-dotted underline-offset-2">Obec s RP</span></span><span>Počet</span><span>Každý<br />X-tý</span>
      </div>
      {ROWS.map(([n, c, k], i) => (
        <div key={n} className={`grid grid-cols-[90px_37px_48px] text-right ${i % 2 ? "bg-[#f4f9fe]" : "bg-[#dce6f1]"}`}>
          <span className="pr-[5px] pl-[5px] text-left tracking-[-0.15px]">{n}</span><span className="pr-[4px]">{c}</span><span className="pr-[5px]">{k}</span>
        </div>
      ))}
      <div className="h-[23px] pr-px text-right text-[13px] leading-[27px] text-[#0b0bd0] underline">více ...</div>
    </div>
  );
}

const HISTORY = [[2010, 973], [2011, 982], [2012, 968], [2013, 961], [2014, 955]];

function Detail() {
  return (
    <div className="w-[790px] bg-[#4a86cf] text-[13px] text-white">
      <div className="h-[67px] pt-[8px] pr-[6px] pl-[5px]">
        <h1 className="text-[18px] leading-[22px] font-bold tracking-[0.09px]">Příjmení: 'Hlávková', počet výskytů 934 v celé ČR</h1>
        <p className="pt-[15px] text-right leading-4 font-bold">Hustota: 1 'Hlávková' na 11457 obyvatel ČR, průměrný věk: 46</p>
      </div>
      <div className="mx-px h-[500px] bg-[#dce6f1]">
        <svg width="788" height="500">
          <defs>
            {SHEETS.map(({ id, clip }) => <clipPath key={id} id={id}><rect x={clip[0]} y={clip[1]} width={clip[2]} height={clip[3]} /></clipPath>)}
          </defs>
          {SHEETS.map((sh) => (
            <g key={sh.id} transform={sh.transform} strokeLinejoin="round" clipPath={`url(#${sh.id})`}>
              <polygon points={sh.base} fill={W} stroke="#c4c8dc" strokeWidth="1.500" />
              {sh.areas.map((a, j) => <polygon key={j} points={a[1]} fill={a[0]} stroke={a[0] > "#d0" ? "#c0c4dd" : a[0]} strokeWidth="1.500" />)}
            </g>
          ))}
          <text x="499" y="484" fontSize="41" fill="#f6fafe" fontFamily="Liberation Sans, sans-serif" textLength="276">© KdeJsme.cz</text>
        </svg>
      </div>
      <div className="px-[5px] pt-[5px] leading-[19px]">
        <div className="flex justify-between pr-px font-bold"><span>Historický vývoj četnosti příjmení "Hlávková":</span><span className="underline">Odkud data čerpáme?</span></div>
        {HISTORY.map(([y, n]) => (
          <div key={y} className="flex items-center whitespace-pre">
            <i className="mr-[10px] ml-[2px] size-1 bg-white" />
            <span>{y}: Počet výskytů <b className="underline">příjmení "Hlávková" v roce {y}</b>: <b>{n}</b> v celé České republice</span>
          </div>
        ))}
      </div>
    </div>
  );
}

export default function App() {
  return (
    <div className="h-[1168px] w-[1920px] overflow-hidden bg-[#a4b2bf] font-['Liberation_Sans',Arial,sans-serif]">
      <Browser />
      <main className="flex h-[820px]">
        <Sidebar />
        <div className="flex h-[820px] w-[1320px] overflow-hidden bg-white">
          <div className="w-[1304px] pl-[156px]">
            <SiteHeader />
            <div className="flex gap-[15px] pt-5"><Ranking /><Detail /></div>
          </div>
          <div className="flex w-4 flex-col items-center bg-[#f0f0f0]">
            <svg className="mt-[6px] shrink-0" width="8" height="5"><path d="M4 0l4 5H0z" fill="#999" /></svg>
            <div className="mt-[6px] h-[453px] w-[13px] shrink-0 bg-[#bfbfbf]" />
            <svg className="mt-auto mb-[6px] shrink-0" width="8" height="5"><path d="M4 5l4-5H0z" fill="#444" /></svg>
          </div>
        </div>
      </main>
    </div>
  );
}
